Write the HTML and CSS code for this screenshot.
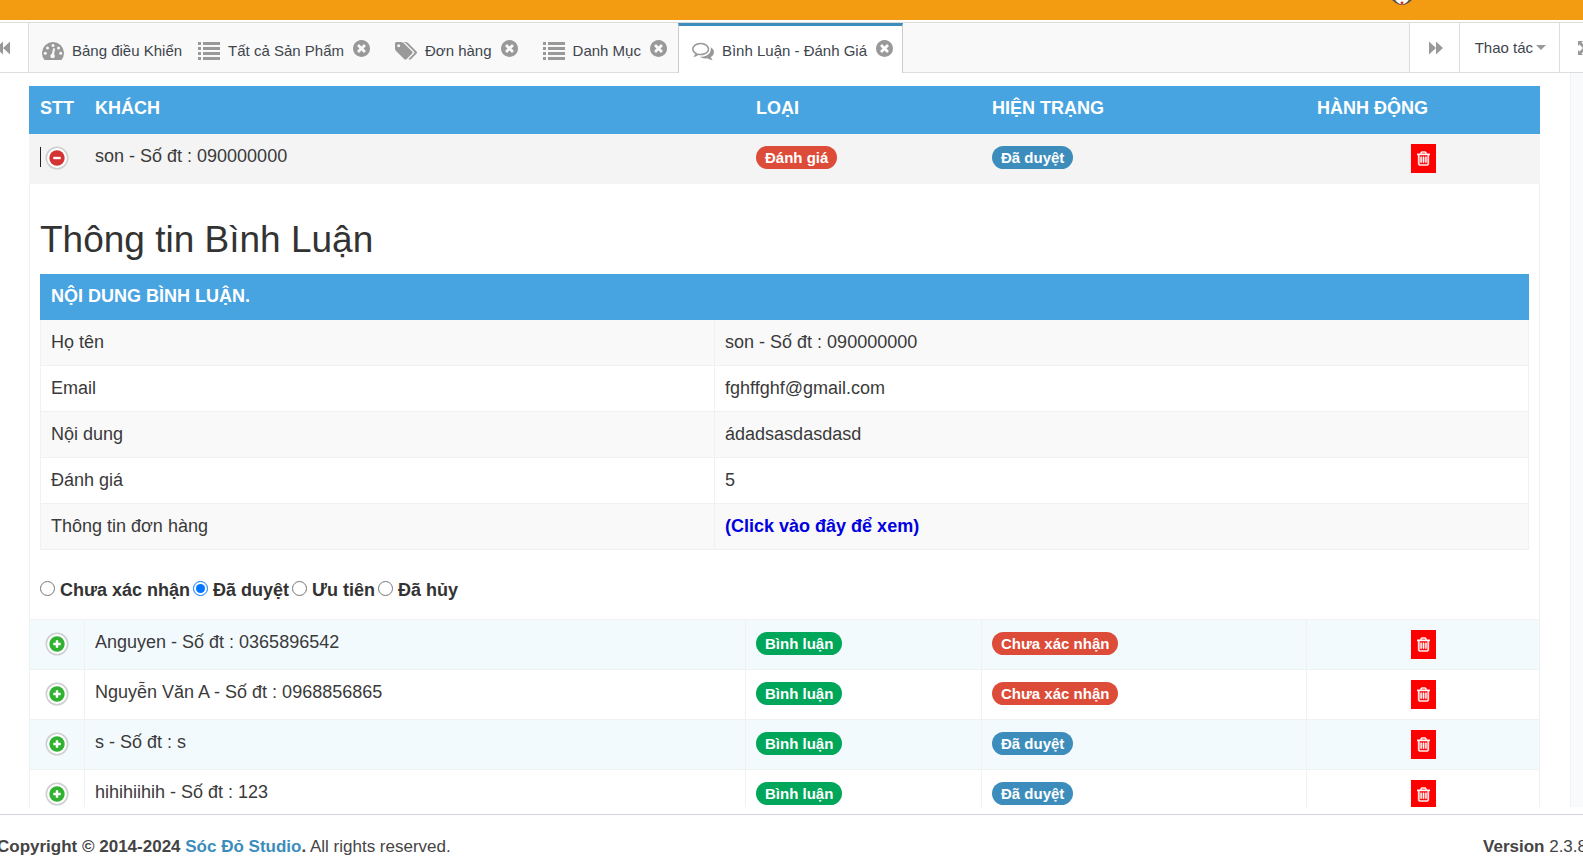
FILE: index.html
```html
<!DOCTYPE html>
<html lang="vi">
<head>
<meta charset="utf-8">
<title>Bình Luận - Đánh Giá</title>
<link rel="stylesheet" href="styles.css">
</head>
<body>
<svg class="sprite" aria-hidden="true">
  <symbol id="close" viewBox="0 128 1536 1536"><path d="M1149 1122q0-26-19-45l-181-181 181-181q19-19 19-45 0-27-19-46l-90-90q-19-19-46-19-26 0-45 19l-181 181-181-181q-19-19-45-19-27 0-46 19l-90 90q-19 19-19 46 0 26 19 45l181 181-181 181q-19 19-19 45 0 27 19 46l90 90q19 19 46 19 26 0 45-19l181-181 181 181q19 19 45 19 27 0 46-19l90-90q19-19 19-46zm387-226q0 209-103 385.5t-279.5 279.5-385.5 103-385.5-103-279.5-279.5-103-385.5 103-385.5 279.5-279.5 385.5-103 385.5 103 279.5 279.5 103 385.5z"/></symbol>
  <symbol id="gauge" viewBox="0 0 22 18"><path d="M2.500 18A11 11 0 1 1 19.500 18Q19.200 18 18.800 18H3.200Q2.800 18 2.500 18Z"/><g fill="#f9f9f9"><circle cx="3.300" cy="11.300" r="1.500"/><circle cx="5.500" cy="5.900" r="1.500"/><circle cx="11" cy="3.600" r="1.500"/><circle cx="16.500" cy="5.900" r="1.500"/><circle cx="18.700" cy="11.300" r="1.500"/><circle cx="10.600" cy="14" r="2.300"/><path d="M12.600 6.800L11.300 13.500H10L11.600 6.600Z" stroke="#f9f9f9"/></g></symbol>
  <symbol id="list" viewBox="0 0 22 18"><path d="M0 0h3v3H0zM5 0h17v3H5zM0 5h3v3H0zM5 5h17v3H5zM0 10h3v3H0zM5 10h17v3H5zM0 15h3v3H0zM5 15h17v3H5z"/></symbol>
  <symbol id="tags" viewBox="0 128 1899 1536"><path d="M448 448q0-53-37.500-90.500t-90.500-37.500-90.500 37.500-37.500 90.500 37.500 90.500 90.500 37.500 90.500-37.500 37.500-90.500zm1067 576q0 53-37 90l-491 492q-39 37-91 37-53 0-90-37l-715-716q-38-37-64.500-101t-26.500-117v-416q0-52 38-90t90-38h416q53 0 117 26.500t102 64.500l715 714q37 39 37 91zm384 0q0 53-37 90l-491 492q-39 37-91 37-36 0-59-14t-53-45l470-470q37-37 37-90 0-52-37-91l-715-714q-38-38-102-64.500t-117-26.500h224q53 0 117 26.500t102 64.500l715 714q37 39 37 91z"/></symbol>
  <symbol id="comments" viewBox="0 192 1792 1472"><path d="M704 384q-153 0-286 52t-211.500 141-78.500 191q0 82 53 158t149 132l97 56-35 84q34-20 62-39l44-31 53 10q78 14 153 14 153 0 286-52t211.500-141 78.500-191-78.500-191-211.500-141-286-52zm0-128q191 0 353.500 68.500t256.500 186.500 94 257-94 257-256.500 186.500-353.500 68.500q-86 0-176-16-124 88-278 128-36 9-86 16h-3q-11 0-20.500-8t-11.500-21q-1-3-1-6.500t.5-6.500 2-6l2.500-5 3.500-5.500 4-5 4.500-5 4-4.500q5-6 23-25t26-29.500 22.500-29 25-38.500 20.500-44q-124-72-195-177t-71-224q0-139 94-257t256.500-186.500 353.500-68.500zm822 1169q10 24 20.500 44t25 38.500 22.500 29 26 29.500 23 25q1 1 4 4.500t4.500 5 4 5 3.500 5.500l2.500 5 2 6 .5 6.500-1 6.500q-3 14-13 22t-22 7q-50-7-86-16-154-40-278-128-90 16-176 16-271 0-472-132 58 4 88 4 161 0 309-45t264-129q125-92 192-212t67-254q0-77-23-152 129 71 204 178t75 230q0 120-71 224.500t-195 176.500z"/></symbol>
  <symbol id="trash" viewBox="0 128 1408 1536"><path stroke="currentColor" stroke-width="50" d="M512 736v576q0 14-9 23t-23 9h-64q-14 0-23-9t-9-23v-576q0-14 9-23t23-9h64q14 0 23 9t9 23zm256 0v576q0 14-9 23t-23 9h-64q-14 0-23-9t-9-23v-576q0-14 9-23t23-9h64q14 0 23 9t9 23zm256 0v576q0 14-9 23t-23 9h-64q-14 0-23-9t-9-23v-576q0-14 9-23t23-9h64q14 0 23 9t9 23zm128 724v-948h-896v948q0 22 7 40.500t14.500 27 10.500 8.500h832q3 0 10.500-8.500t14.500-27 7-40.500zm-672-1076h448l-48-117q-7-9-17-11h-317q-10 2-17 11zm928 32v64q0 14-9 23t-23 9h-96v948q0 83-47 143.500t-113 60.500h-832q-66 0-113-58.500t-47-141.500v-952h-96q-14 0-23-9t-9-23v-64q0-14 9-23t23-9h309l70-167q15-37 54-63t79-26h320q40 0 79 26t54 63l70 167h309q14 0 23 9t9 23z"/></symbol>
  <symbol id="forward" viewBox="0 0 14 14"><path d="M0 0.500L7 7V0.500L14 7L7 13.500V7L0 13.500Z"/></symbol>
  <symbol id="backward" viewBox="0 0 14 14"><path d="M14 0.500L7 7V0.500L0 7L7 13.500V7L14 13.500Z"/></symbol>
  <symbol id="expand" viewBox="0 0 14 14"><path d="M0 0h5L3.500 1.500L7 5L10.500 1.500L9 0h5v5L12.500 3.500L9 7L12.500 10.500L14 9v5H9L10.500 12.500L7 9L3.500 12.500L5 14H0V9L1.500 10.500L5 7L1.500 3.500L0 5Z"/></symbol>
  <symbol id="plus" viewBox="0 0 24 24"><circle cx="12" cy="12" r="10.700" fill="#fff" stroke="#cdd0cf" stroke-width="1.600"/><circle cx="12" cy="12" r="7.700" fill="#31b131"/><path d="M12 8.300V15.700M8.300 12H15.700" stroke="#fff" stroke-width="2.400"/></symbol>
  <symbol id="minus" viewBox="0 0 24 24"><circle cx="12" cy="12" r="10.700" fill="#fff" stroke="#cdd0cf" stroke-width="1.600"/><circle cx="12" cy="12" r="7.700" fill="#d33333"/><path d="M8.300 12H15.700" stroke="#fff" stroke-width="2.400"/></symbol>
</svg>

<header class="topbar">
  <svg class="avatar" viewBox="0 0 24 6"><path d="M0 0H24Q18 6 12 6Q6 6 0 0Z" fill="#5a5548"/><path d="M4 0H20Q17 5 12 5Q7 5 4 0Z" fill="#fff"/><path d="M10 3L12 1.500L14 3L13 5.500H11Z" fill="#d8352a"/></svg>
</header>

<nav class="tabbar">
  <button class="tool tool-back" aria-label="Lùi"><svg class="arrow"><use href="#backward"/></svg></button>
  <div class="tabs">
    <div class="tab tab-home"><svg class="tab-icon"><use href="#gauge"/></svg><a href="#">Bảng điều Khiển</a></div>
    <div class="tab"><svg class="tab-icon"><use href="#list"/></svg><a href="#">Tất cả Sản Phẩm</a><button class="tab-close" aria-label="Đóng"><svg><use href="#close"/></svg></button></div>
    <div class="tab"><svg class="tab-icon"><use href="#tags"/></svg><a href="#">Đơn hàng</a><button class="tab-close" aria-label="Đóng"><svg><use href="#close"/></svg></button></div>
    <div class="tab"><svg class="tab-icon"><use href="#list"/></svg><a href="#">Danh Mục</a><button class="tab-close" aria-label="Đóng"><svg><use href="#close"/></svg></button></div>
    <div class="tab tab-active"><svg class="tab-icon"><use href="#comments"/></svg><a href="#">Bình Luận - Đánh Giá</a><button class="tab-close" aria-label="Đóng"><svg><use href="#close"/></svg></button></div>
  </div>
  <button class="tool tool-next" aria-label="Tiến"><svg class="arrow"><use href="#forward"/></svg></button>
  <button class="tool tool-menu">Thao tác<span class="caret"></span></button>
  <button class="tool tool-expand" aria-label="Toàn màn hình"><svg class="arrow"><use href="#expand"/></svg></button>
</nav>

<main class="content">
  <div class="panel">
    <table class="list">
      <colgroup><col class="c-no"><col class="c-guest"><col class="c-type"><col class="c-state"><col class="c-action"></colgroup>
      <thead><tr><th>STT</th><th>KHÁCH</th><th>LOẠI</th><th>HIỆN TRẠNG</th><th>HÀNH ĐỘNG</th></tr></thead>
      <tbody>
        <tr class="open">
          <td class="toggle cursor"><button aria-label="Thu gọn"><svg><use href="#minus"/></svg></button></td>
          <td>son - Số đt : 090000000</td>
          <td><span class="badge red">Đánh giá</span></td>
          <td><span class="badge blue">Đã duyệt</span></td>
          <td class="action"><button class="delete" aria-label="Xóa"><svg><use href="#trash"/></svg></button></td>
        </tr>
        <tr class="detail">
          <td colspan="5">
            <h1>Thông tin Bình Luận</h1>
            <table class="info">
              <colgroup><col class="c-label"><col></colgroup>
              <thead><tr><th colspan="2">NỘI DUNG BÌNH LUẬN.</th></tr></thead>
              <tbody>
                <tr><td>Họ tên</td><td>son - Số đt : 090000000</td></tr>
                <tr><td>Email</td><td>fghffghf@gmail.com</td></tr>
                <tr><td>Nội dung</td><td>ádadsasdasdasd</td></tr>
                <tr><td>Đánh giá</td><td>5</td></tr>
                <tr><td>Thông tin đơn hàng</td><td><a class="order" href="#">(Click vào đây để xem)</a></td></tr>
              </tbody>
            </table>
            <div class="states">
              <input type="radio" name="state" id="s1"><label for="s1">Chưa xác nhận</label>
              <input type="radio" name="state" id="s2" checked><label for="s2">Đã duyệt</label>
              <input type="radio" name="state" id="s3"><label for="s3">Ưu tiên</label>
              <input type="radio" name="state" id="s4"><label for="s4">Đã hủy</label>
            </div>
          </td>
        </tr>
        <tr class="tint">
          <td class="toggle"><button aria-label="Mở rộng"><svg><use href="#plus"/></svg></button></td>
          <td>Anguyen - Số đt : 0365896542</td>
          <td><span class="badge green">Bình luận</span></td>
          <td><span class="badge red">Chưa xác nhận</span></td>
          <td class="action"><button class="delete" aria-label="Xóa"><svg><use href="#trash"/></svg></button></td>
        </tr>
        <tr>
          <td class="toggle"><button aria-label="Mở rộng"><svg><use href="#plus"/></svg></button></td>
          <td>Nguyễn Văn A - Số đt : 0968856865</td>
          <td><span class="badge green">Bình luận</span></td>
          <td><span class="badge red">Chưa xác nhận</span></td>
          <td class="action"><button class="delete" aria-label="Xóa"><svg><use href="#trash"/></svg></button></td>
        </tr>
        <tr class="tint">
          <td class="toggle"><button aria-label="Mở rộng"><svg><use href="#plus"/></svg></button></td>
          <td>s - Số đt : s</td>
          <td><span class="badge green">Bình luận</span></td>
          <td><span class="badge blue">Đã duyệt</span></td>
          <td class="action"><button class="delete" aria-label="Xóa"><svg><use href="#trash"/></svg></button></td>
        </tr>
        <tr>
          <td class="toggle"><button aria-label="Mở rộng"><svg><use href="#plus"/></svg></button></td>
          <td>hihihiihih - Số đt : 123</td>
          <td><span class="badge green">Bình luận</span></td>
          <td><span class="badge blue">Đã duyệt</span></td>
          <td class="action"><button class="delete" aria-label="Xóa"><svg><use href="#trash"/></svg></button></td>
        </tr>
      </tbody>
    </table>
  </div>
</main>

<footer class="footer">
  <div><strong>Copyright © 2014-2024 <a href="#">Sóc Đỏ Studio</a>.</strong> All rights reserved.</div>
  <div class="version"><strong>Version</strong> 2.3.8</div>
</footer>
</body>
</html>
```
FILE: styles.css
```css
* { box-sizing: border-box; }
body {
  margin: 0;
  height: 100vh;
  display: flex;
  flex-direction: column;
  overflow: hidden;
  background: #fff;
  color: #3a3a3a;
  font: 18px/25px "Liberation Sans", Arial, sans-serif;
}
button { border: 0; padding: 0; background: none; font: inherit; color: inherit; display: block; }
svg { display: block; fill: currentColor; }
a { color: inherit; text-decoration: none; }
.sprite { position: absolute; width: 0; height: 0; }

.topbar {
  flex: none;
  height: 20px;
  margin-bottom: 2px;
  padding-right: 170px;
  background: #f39c12;
}
.avatar { width: 22px; height: 5px; margin-left: auto; }

.tabbar {
  flex: none;
  display: flex;
  height: 51px;
  border-top: 1px solid #ddd;
  color: #999;
  font-size: 15px;
}
.tool {
  flex: none;
  border-left: 1px solid #ddd;
  border-bottom: 1px solid #ddd;
}
.arrow { width: 14px; height: 14px; margin: 0 auto; }
.tool-back { width: 28px; border-left: 0; padding-right: 18px; }
.tool-back .arrow { margin-left: -4px; }
.tool-next { width: 50px; padding-left: 4px; }
.tool-menu {
  display: flex;
  align-items: center;
  gap: 3px;
  padding: 0 13px 0 15px;
  color: #40454d;
}
.caret {
  border: 5px solid transparent;
  border-top-color: #999;
  border-bottom: 0;
}
.tool-expand { width: 24px; padding-left: 18px; overflow: hidden; }
.tabs {
  flex: 1;
  display: flex;
  background: #f9f9f9;
  box-shadow: inset 1px 0 #ddd, inset 0 -1px #ddd;
}
.tab {
  display: flex;
  align-items: center;
  gap: 8px;
  padding: 6px 11px 0 14px;
}
.tab a { color: #40454d; margin-bottom: 2px; }
.tab-home { padding-right: 2px; }
.tab-icon { width: 22px; height: 18px; }
.tab-close { margin: 0 0 5px 1px; }
.tab-close svg { width: 17px; height: 17px; }
.tab-active {
  padding: 3px 9px 0 13px;
  border: 1px solid #ccc;
  border-top: 3px solid #3c8dbc;
  border-bottom: 0;
  background: #fff;
}

.content {
  flex: 1;
  min-height: 0;
  overflow: hidden;
  margin-bottom: 7px;
  padding-right: 13px;
  background: #f9fafc;
}
.panel {
  height: 100%;
  overflow: hidden;
  padding: 13px 30px 0 29px;
  background: #fff;
  box-shadow: 1px 0 #f0f1f3;
}
table { width: 100%; table-layout: fixed; border-collapse: collapse; }
th, td { border: 1px solid #f0f1f1; text-align: left; vertical-align: top; padding: 10px; }
th { background: #48a4e1; border-color: #48a4e1; color: #fff; padding: 9px 10px 10px; }
.c-no { width: 55px; }
.c-type { width: 236px; }
.c-state { width: 325px; }
.c-action { width: 233px; }
.list > thead th { height: 47px; }
.list > tbody > tr > td { height: 50px; }
.open td { background: #f4f4f4; border-color: #f4f4f4; }
.tint td { background: #f3fafe; }
.toggle { position: relative; }
.toggle button { margin: 2px auto 0; }
.toggle svg { width: 24px; height: 24px; }
.cursor::before {
  content: "";
  position: absolute;
  left: 10px;
  top: 13px;
  width: 1px;
  height: 20px;
  background: #222;
}
.badge {
  display: block;
  width: fit-content;
  margin-top: 2px;
  padding: 0 9px;
  border-radius: 12px;
  color: #fff;
  font-size: 15px;
  font-weight: 700;
  line-height: 23px;
}
.red { background: #dd4b39; }
.blue { background: #3c8dbc; }
.green { background: #00a65a; }
.delete {
  width: 25px;
  height: 29px;
  margin: 0 auto;
  background: #f00;
  color: #fff;
}
.delete svg { width: 13px; height: 15px; margin: 0 auto; }

h1 { margin: 25px 0 14px; font-size: 37px; font-weight: 400; line-height: 41px; color: #333; }
.info th { height: 45px; }
.info td { height: 46px; }
.info tbody tr:nth-child(odd) td { background: #f9f9f9; }
.c-label { width: 45.3%; }
.order { color: #0000e0; font-weight: 700; }
.states {
  display: flex;
  align-items: center;
  margin: 28px 0 6px;
  color: #333;
  font-weight: 700;
}
.states input { width: 15px; height: 15px; margin: 0 5px 5px 0; }
.states label { margin-right: 3px; }

.footer {
  flex: none;
  display: flex;
  justify-content: space-between;
  height: 48px;
  margin: 0 -4px 0 -3px;
  padding-top: 19px;
  border-top: 1px solid #d2d6de;
  color: #444;
  font-size: 17px;
}
.footer a { color: #3c8dbc; }
.footer div { white-space: nowrap; }
```
